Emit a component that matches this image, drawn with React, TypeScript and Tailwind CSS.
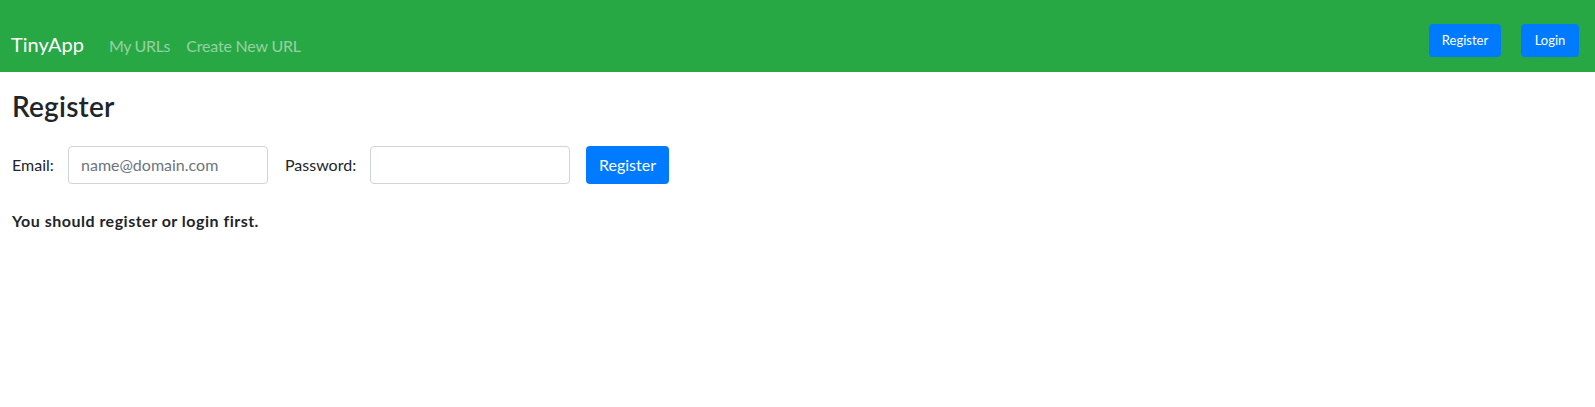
import React from 'react';

const NavBar: React.FC = () => (
  <nav className="flex h-[72px] justify-between bg-[#28a745] pl-[11px] pr-4">
    <div className="flex items-baseline self-end pb-[13px]">
      <a className="mr-[25px] text-[20px] leading-[30px] text-white" href="#">
        TinyApp
      </a>
      <a className="mr-[16px] text-[16px] leading-6 tracking-[-0.3px] text-white/50" href="#">
        My URLs
      </a>
      <a className="text-[16px] leading-6 tracking-[-0.2px] text-white/50" href="#">
        Create New URL
      </a>
    </div>
    <div className="flex gap-5 self-start pt-6">
      <button className="h-[33px] w-[72px] rounded bg-[#007bff] text-[13px] text-white">Register</button>
      <button className="h-[33px] w-[58px] rounded bg-[#007bff] text-[13px] text-white">Login</button>
    </div>
  </nav>
);

export default function App() {
  return (
    <div className="min-h-[407px] bg-white font-['Lato',sans-serif] text-[#212529]">
      <NavBar />
      <main className="px-3">
        <h3 className="mt-[18px] text-[28px] font-semibold leading-[1.2] tracking-[0.2px]">Register</h3>
        <form className="mt-[22px] flex items-center" onSubmit={(e) => e.preventDefault()}>
          <label className="w-[56px] text-[16px]" htmlFor="email">
            Email:
          </label>
          <input
            id="email"
            type="email"
            placeholder="name@domain.com"
            className="h-[38px] w-[200px] rounded border border-[#ced4da] px-3 text-[16px] placeholder:text-[#6c757d]"
          />
          <label className="ml-[17px] w-[85px] text-[16px]" htmlFor="password">
            Password:
          </label>
          <input
            id="password"
            type="password"
            className="h-[38px] w-[200px] rounded border border-[#ced4da] px-3 text-[16px]"
          />
          <button type="submit" className="ml-4 h-[38px] w-[83px] rounded bg-[#007bff] text-[16px] text-white">
            Register
          </button>
        </form>
        <p className="mt-[25px] text-[16px] font-bold leading-6 tracking-[0.5px]">You should register or login first.</p>
      </main>
    </div>
  );
}
